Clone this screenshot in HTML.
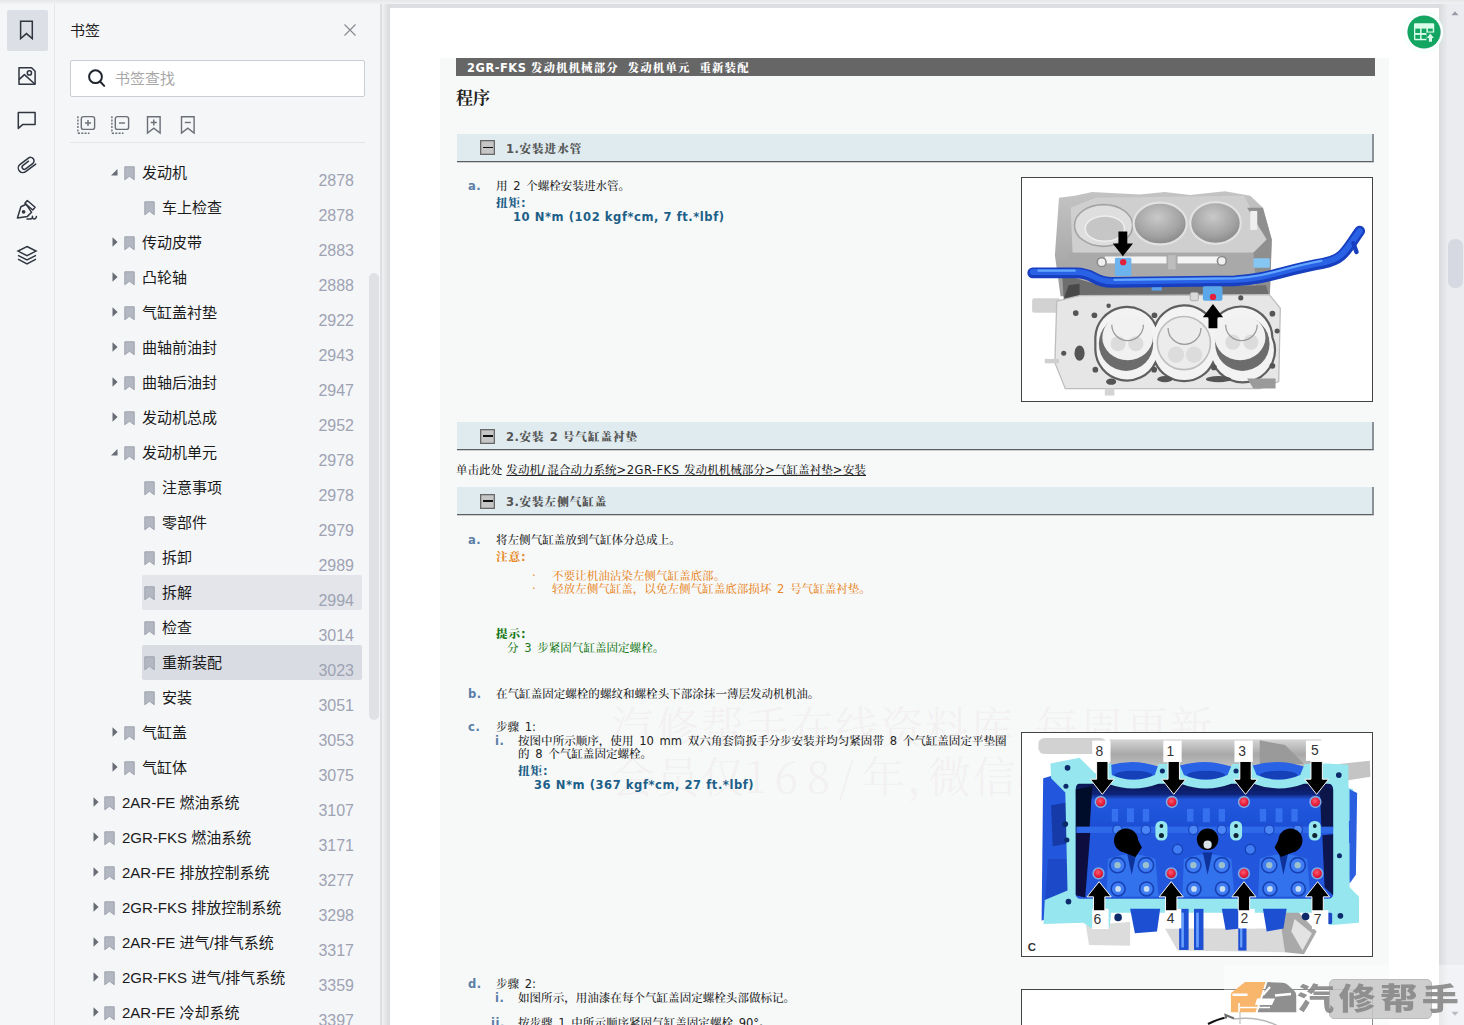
<!DOCTYPE html>
<html lang="zh-CN">
<head>
<meta charset="utf-8">
<title>书签 - 2GR-FKS 发动机机械部分 发动机单元 重新装配</title>
<style>
html,body{margin:0;padding:0;}
body{width:1464px;height:1025px;overflow:hidden;position:relative;background:#f5f6f8;font-family:"Liberation Sans","Noto Sans CJK SC",sans-serif;color:#1b1b1b;}
.abs,#lb,#sb,#main,#page,#content,.hl,.ar,.bk,.rt,.pg{position:absolute;}
/* top shadow strip */
#topsh{position:absolute;left:0;top:0;width:1464px;height:3.500px;background:linear-gradient(#e6e7e9,#f1f2f4);z-index:5;}
/* left icon bar */
#lb{left:0;top:0;width:54px;height:1025px;background:#f5f6f8;border-right:1px solid #e4e6ea;}
#lb .act{position:absolute;left:7px;top:10px;width:41px;height:41px;background:#dcdfe6;border-radius:2px;}
#lb svg{position:absolute;}
/* sidebar */
#sb{left:55px;top:0;width:325px;height:1025px;background:#f5f6f8;border-right:2px solid #dddfe3;overflow:hidden;}
#sb .ttl{position:absolute;left:15px;top:20px;font-size:15px;line-height:22px;color:#222;}
#sb .search{position:absolute;box-sizing:border-box;left:15px;top:60px;width:295px;height:36.5px;border:1px solid #c9cdd4;background:#fff;border-radius:2px;}
#sb .search span{position:absolute;left:44px;top:7px;font-size:15px;line-height:22px;color:#a8a8a8;}
#sb .divider{position:absolute;left:15px;top:142px;width:295px;height:1px;background:#e3e5e9;}
#tree{position:absolute;left:-55px;top:0;width:436px;height:1025px;}
.hl{left:142px;width:220px;height:34.5px;border-radius:2px;}
.hl.hov{background:#e3e5ea;}
.hl.sel{background:#d9dce3;}
.rt{font-size:15px;line-height:35px;height:35px;white-space:nowrap;color:#1a1a1a;}
.pg{left:300px;width:54px;text-align:right;font-size:16px;line-height:35px;height:35px;color:#9ea3b3;}
#sbar{position:absolute;left:314.300px;top:273px;width:9.500px;height:447px;border-radius:5px;background:#dfe1e5;}
/* main */
#main{left:382px;top:0;width:1082px;height:1025px;background:#eeeff1;overflow:hidden;}
#page{left:8px;top:8px;width:1049px;height:1017px;background:#fff;overflow:hidden;}
#pgsh{position:absolute;left:1px;top:3.5px;width:1064px;height:1030px;background:linear-gradient(to right,#f0f1f2 0,#e6e7e9 2px,#d9dadc 7px,#dcdde0 8px,#dddee1 9px,#dddee1 1055px,#dadbdd 1056px,#e9eaed 100%);}
#vsb{position:absolute;left:1065px;top:0;width:17px;height:1025px;background:#ebecf0;}
#vsb .th{position:absolute;left:1px;top:238.500px;width:14.500px;height:49.500px;border-radius:7px;background:#d6d9e2;}
#content{left:50px;top:50px;width:948.500px;height:967px;background:#f7f9f9;font-family:"DejaVu Sans","Noto Serif CJK SC",serif;font-size:11.55px;color:#222;font-weight:500;}
#content div, #content span{position:absolute;white-space:nowrap;}
#content div{line-height:16px;height:16px;}
#content .b{font-weight:bold;}
#content span{position:static !important;}
#content .zb{letter-spacing:1px;font-weight:900;}
#content .b{letter-spacing:0.55px;word-spacing:0;}
#content .tx,#content .nt,#content .hn{word-spacing:2px;}
#content .hdrt .zb{letter-spacing:1.15px;}
#content .l1{letter-spacing:0.45px;}
#content .l2{letter-spacing:2.4px;}
#content .lk{word-spacing:0.5px;}
#content .hdrt{font-size:11.4px;}
#content .h1{font-size:17px;font-weight:bold;line-height:24px;height:24px;color:#222;}
#content .sec{width:915px;height:27px !important;background:#dfebef;border-bottom:1px solid #5c5f60;border-right:2px solid #8c9296;box-shadow:0 1px 0 rgba(120,124,126,0.35);}
#content .mn{width:13px;height:13px !important;background:#c6c6c6;border:1px solid #686868;box-shadow:inset 0 0 0 0.500px #8e8e8e;}
#content .mn i{position:absolute;left:2px;top:5.700px;width:9.500px;height:1.700px !important;background:#111;}
#content .st{color:#555;}
#content .lab{color:#5b7fa8;}
#content .tx{color:#222;}
#content .tq{color:#1d5f88;}
#content .nt{color:#e8892b;}
#content .hn{color:#1a7a1a;}
#content .wm{font-family:"Noto Serif CJK SC",serif;font-size:43px;line-height:48px !important;height:48px !important;color:#f2f0f0;font-weight:300;letter-spacing:1.9px;word-spacing:7px;}
#content .fig{width:350px;height:223px;border:1px solid #444;background:#fff;}
#ovl{position:absolute;left:1224px;top:965px;width:240px;height:60px;background:rgba(255,255,255,0.38);z-index:4;overflow:hidden;}
#ovl .tip{position:absolute;left:105px;top:14px;width:101px;height:38px;border:1px solid #bcbcbc;border-radius:5px;background:rgba(198,198,198,0.85);}
#ovl .car{position:absolute;left:6px;top:16px;}
#ovl .lg{position:absolute;left:73px;top:6px;font-family:"Noto Sans CJK SC",sans-serif;font-weight:900;font-size:37px;line-height:50px;letter-spacing:4.6px;color:#8a8a8a;white-space:nowrap;transform:scaleY(0.8);transform-origin:0 50%;opacity:0.92;}
#sb .ic{position:absolute;}
#gbtn{position:absolute;left:1405px;top:13px;width:34px;height:34px;border:2px solid #fff;border-radius:50%;z-index:3;box-shadow:0 0 3px rgba(200,255,230,0.9);}
#gbtn svg{display:block;}
.sarr{position:absolute;}
</style>
</head>
<body>
<div id="lb">
  <div class="act"></div>
<svg style="left:15px;top:18px" width="24" height="24" viewBox="0 0 24 24" fill="none" stroke="#2f3640" stroke-width="1.5" stroke-linejoin="miter"><path d="M5.6 3.3H17.3V20.6L11.45 15.6L5.6 20.6Z"/></svg>
<svg style="left:15px;top:63.5px" width="24" height="24" viewBox="0 0 24 24" fill="none" stroke="#2f3640" stroke-width="1.5" stroke-linejoin="round"><path d="M4 3.8H16.6L20.1 7.3V20.2H4Z"/><circle cx="14.4" cy="8.9" r="2.1"/><path d="M4 15.6L9.4 10.6L19.8 20"/></svg>
<svg style="left:15px;top:108px" width="24" height="24" viewBox="0 0 24 24" fill="none" stroke="#2f3640" stroke-width="1.5" stroke-linejoin="round"><path d="M3.3 4.5H20.1V16.6H7.6L3.3 20.4Z"/></svg>
<svg style="left:15px;top:152.5px" width="24" height="24" viewBox="0 0 24 24" fill="none" stroke="#2f3640" stroke-width="1.5" stroke-linecap="round"><g transform="rotate(-37 12 12)"><path d="M15.500 9.900H8.600a2.200 2.200 0 0 0 0 4.400H17.300a3.500 3.500 0 0 0 0-7H6.900a4.600 4.600 0 0 0 0 9.200H19.500"/></g></svg>
<svg style="left:15px;top:198px" width="24" height="24" viewBox="0 0 24 24" fill="none" stroke="#2f3640" stroke-width="1.5" stroke-linejoin="round" stroke-linecap="round"><path d="M2.4 20L5.9 8.8L11.2 6.3L16.6 14.3L12.4 18.4Z"/><path d="M12.3 2.5L20.1 9.2L17.7 12L9.9 5.2Z"/><circle cx="8.6" cy="13.8" r="1.1" fill="#2f3640"/><path d="M12 20.9h3.2q2.6 0 2.2-2.6q.1 3 2.1 2.6q1.600-.3 1.900-2.300"/></svg>
<svg style="left:15px;top:243px" width="24" height="24" viewBox="0 0 24 24" fill="none" stroke="#2f3640" stroke-width="1.5" stroke-linejoin="miter"><path d="M12 3.5L21 8.1L12 12.700L3 8.1Z"/><path d="M3 12.300L12 16.900L21 12.300"/><path d="M3 16.200L12 20.800L21 16.200"/></svg>

</div>
<div id="sb">
  <div class="ttl">书签</div>
  <div class="search"><span>书签查找</span></div>
  <svg class="ic" style="left:288px;top:23px" width="14" height="14" viewBox="0 0 14 14" fill="none" stroke="#85888f" stroke-width="1.1"><path d="M1.500 1.500L12.500 12.500M12.500 1.500L1.500 12.500"/></svg>
<svg class="ic" style="left:30.5px;top:67px" width="22" height="22" viewBox="0 0 22 22" fill="none" stroke="#20242c" stroke-width="2" stroke-linecap="round"><circle cx="9.500" cy="9.700" r="6.400"/><path d="M14.300 14.800L18.200 18.900"/></svg>
<svg class="ic" style="left:21px;top:115px" width="20" height="20" viewBox="0 0 20 20" fill="none" stroke="#6b6f77" stroke-width="1.400"><rect x="5.300" y="1.600" width="13.300" height="12.800" rx="2.200"/><path d="M12 5V11M9 8H15"/><path d="M1.900 1.200V18.200M1.900 18M2 18.200H13.500" stroke-dasharray="2 1.300"/></svg>
<svg class="ic" style="left:55px;top:115px" width="20" height="20" viewBox="0 0 20 20" fill="none" stroke="#6b6f77" stroke-width="1.400"><rect x="5.300" y="1.600" width="13.300" height="12.800" rx="2.200"/><path d="M9 8H15"/><path d="M1.900 1.200V18.200M2 18.200H13.500" stroke-dasharray="2 1.300"/></svg>
<svg class="ic" style="left:90px;top:115px" width="18" height="20" viewBox="0 0 18 20" fill="none" stroke="#6b6f77" stroke-width="1.400"><path d="M2.500 1.800H15.100V18L8.800 13.200L2.500 18Z"/><path d="M8.800 4.500V10.500M5.800 7.500H11.800"/></svg>
<svg class="ic" style="left:124px;top:115px" width="18" height="20" viewBox="0 0 18 20" fill="none" stroke="#6b6f77" stroke-width="1.400"><path d="M2.500 1.800H15.100V18L8.800 13.200L2.500 18Z"/><path d="M5.800 7.500H11.800"/></svg>

  <div class="divider"></div>
  <div id="tree">
<svg class="ar" style="left:109px;top:167.0px" width="10" height="10" viewBox="0 0 10 10"><path d="M8.5 2v6.5H2z" fill="#686c74"/></svg>
<svg class="bk" style="left:124px;top:165.5px" width="11" height="15" viewBox="0 0 11 15"><path d="M0.8 0.8h9.4v13L5.5 10.2 0.8 13.8z" fill="#b3b7c1" stroke="#9ea3ae" stroke-width="1"/></svg>
<div class="rt" style="left:142px;top:155.0px">发动机</div>
<div class="pg" style="top:163.1px">2878</div>
<svg class="bk" style="left:144px;top:200.5px" width="11" height="15" viewBox="0 0 11 15"><path d="M0.8 0.8h9.4v13L5.5 10.2 0.8 13.8z" fill="#b3b7c1" stroke="#9ea3ae" stroke-width="1"/></svg>
<div class="rt" style="left:162px;top:190.0px">车上检查</div>
<div class="pg" style="top:198.1px">2878</div>
<svg class="ar" style="left:111px;top:236.0px" width="8" height="12" viewBox="0 0 8 12"><path d="M1.5 1.2L6.6 6 1.5 10.8z" fill="#686c74"/></svg>
<svg class="bk" style="left:124px;top:235.5px" width="11" height="15" viewBox="0 0 11 15"><path d="M0.8 0.8h9.4v13L5.5 10.2 0.8 13.8z" fill="#b3b7c1" stroke="#9ea3ae" stroke-width="1"/></svg>
<div class="rt" style="left:142px;top:225.0px">传动皮带</div>
<div class="pg" style="top:233.1px">2883</div>
<svg class="ar" style="left:111px;top:271.0px" width="8" height="12" viewBox="0 0 8 12"><path d="M1.5 1.2L6.6 6 1.5 10.8z" fill="#686c74"/></svg>
<svg class="bk" style="left:124px;top:270.5px" width="11" height="15" viewBox="0 0 11 15"><path d="M0.8 0.8h9.4v13L5.5 10.2 0.8 13.8z" fill="#b3b7c1" stroke="#9ea3ae" stroke-width="1"/></svg>
<div class="rt" style="left:142px;top:260.0px">凸轮轴</div>
<div class="pg" style="top:268.1px">2888</div>
<svg class="ar" style="left:111px;top:306.0px" width="8" height="12" viewBox="0 0 8 12"><path d="M1.5 1.2L6.6 6 1.5 10.8z" fill="#686c74"/></svg>
<svg class="bk" style="left:124px;top:305.5px" width="11" height="15" viewBox="0 0 11 15"><path d="M0.8 0.8h9.4v13L5.5 10.2 0.8 13.8z" fill="#b3b7c1" stroke="#9ea3ae" stroke-width="1"/></svg>
<div class="rt" style="left:142px;top:295.0px">气缸盖衬垫</div>
<div class="pg" style="top:303.1px">2922</div>
<svg class="ar" style="left:111px;top:341.0px" width="8" height="12" viewBox="0 0 8 12"><path d="M1.5 1.2L6.6 6 1.5 10.8z" fill="#686c74"/></svg>
<svg class="bk" style="left:124px;top:340.5px" width="11" height="15" viewBox="0 0 11 15"><path d="M0.8 0.8h9.4v13L5.5 10.2 0.8 13.8z" fill="#b3b7c1" stroke="#9ea3ae" stroke-width="1"/></svg>
<div class="rt" style="left:142px;top:330.0px">曲轴前油封</div>
<div class="pg" style="top:338.1px">2943</div>
<svg class="ar" style="left:111px;top:376.0px" width="8" height="12" viewBox="0 0 8 12"><path d="M1.5 1.2L6.6 6 1.5 10.8z" fill="#686c74"/></svg>
<svg class="bk" style="left:124px;top:375.5px" width="11" height="15" viewBox="0 0 11 15"><path d="M0.8 0.8h9.4v13L5.5 10.2 0.8 13.8z" fill="#b3b7c1" stroke="#9ea3ae" stroke-width="1"/></svg>
<div class="rt" style="left:142px;top:365.0px">曲轴后油封</div>
<div class="pg" style="top:373.1px">2947</div>
<svg class="ar" style="left:111px;top:411.0px" width="8" height="12" viewBox="0 0 8 12"><path d="M1.5 1.2L6.6 6 1.5 10.8z" fill="#686c74"/></svg>
<svg class="bk" style="left:124px;top:410.5px" width="11" height="15" viewBox="0 0 11 15"><path d="M0.8 0.8h9.4v13L5.5 10.2 0.8 13.8z" fill="#b3b7c1" stroke="#9ea3ae" stroke-width="1"/></svg>
<div class="rt" style="left:142px;top:400.0px">发动机总成</div>
<div class="pg" style="top:408.1px">2952</div>
<svg class="ar" style="left:109px;top:447.0px" width="10" height="10" viewBox="0 0 10 10"><path d="M8.5 2v6.5H2z" fill="#686c74"/></svg>
<svg class="bk" style="left:124px;top:445.5px" width="11" height="15" viewBox="0 0 11 15"><path d="M0.8 0.8h9.4v13L5.5 10.2 0.8 13.8z" fill="#b3b7c1" stroke="#9ea3ae" stroke-width="1"/></svg>
<div class="rt" style="left:142px;top:435.0px">发动机单元</div>
<div class="pg" style="top:443.1px">2978</div>
<svg class="bk" style="left:144px;top:480.5px" width="11" height="15" viewBox="0 0 11 15"><path d="M0.8 0.8h9.4v13L5.5 10.2 0.8 13.8z" fill="#b3b7c1" stroke="#9ea3ae" stroke-width="1"/></svg>
<div class="rt" style="left:162px;top:470.0px">注意事项</div>
<div class="pg" style="top:478.1px">2978</div>
<svg class="bk" style="left:144px;top:515.5px" width="11" height="15" viewBox="0 0 11 15"><path d="M0.8 0.8h9.4v13L5.5 10.2 0.8 13.8z" fill="#b3b7c1" stroke="#9ea3ae" stroke-width="1"/></svg>
<div class="rt" style="left:162px;top:505.0px">零部件</div>
<div class="pg" style="top:513.1px">2979</div>
<svg class="bk" style="left:144px;top:550.5px" width="11" height="15" viewBox="0 0 11 15"><path d="M0.8 0.8h9.4v13L5.5 10.2 0.8 13.8z" fill="#b3b7c1" stroke="#9ea3ae" stroke-width="1"/></svg>
<div class="rt" style="left:162px;top:540.0px">拆卸</div>
<div class="pg" style="top:548.1px">2989</div>
<div class="hl hov" style="top:575.0px"></div>
<svg class="bk" style="left:144px;top:585.5px" width="11" height="15" viewBox="0 0 11 15"><path d="M0.8 0.8h9.4v13L5.5 10.2 0.8 13.8z" fill="#b3b7c1" stroke="#9ea3ae" stroke-width="1"/></svg>
<div class="rt" style="left:162px;top:575.0px">拆解</div>
<div class="pg" style="top:583.1px">2994</div>
<svg class="bk" style="left:144px;top:620.5px" width="11" height="15" viewBox="0 0 11 15"><path d="M0.8 0.8h9.4v13L5.5 10.2 0.8 13.8z" fill="#b3b7c1" stroke="#9ea3ae" stroke-width="1"/></svg>
<div class="rt" style="left:162px;top:610.0px">检查</div>
<div class="pg" style="top:618.1px">3014</div>
<div class="hl sel" style="top:645.0px"></div>
<svg class="bk" style="left:144px;top:655.5px" width="11" height="15" viewBox="0 0 11 15"><path d="M0.8 0.8h9.4v13L5.5 10.2 0.8 13.8z" fill="#b3b7c1" stroke="#9ea3ae" stroke-width="1"/></svg>
<div class="rt" style="left:162px;top:645.0px">重新装配</div>
<div class="pg" style="top:653.1px">3023</div>
<svg class="bk" style="left:144px;top:690.5px" width="11" height="15" viewBox="0 0 11 15"><path d="M0.8 0.8h9.4v13L5.5 10.2 0.8 13.8z" fill="#b3b7c1" stroke="#9ea3ae" stroke-width="1"/></svg>
<div class="rt" style="left:162px;top:680.0px">安装</div>
<div class="pg" style="top:688.1px">3051</div>
<svg class="ar" style="left:111px;top:726.0px" width="8" height="12" viewBox="0 0 8 12"><path d="M1.5 1.2L6.6 6 1.5 10.8z" fill="#686c74"/></svg>
<svg class="bk" style="left:124px;top:725.5px" width="11" height="15" viewBox="0 0 11 15"><path d="M0.8 0.8h9.4v13L5.5 10.2 0.8 13.8z" fill="#b3b7c1" stroke="#9ea3ae" stroke-width="1"/></svg>
<div class="rt" style="left:142px;top:715.0px">气缸盖</div>
<div class="pg" style="top:723.1px">3053</div>
<svg class="ar" style="left:111px;top:761.0px" width="8" height="12" viewBox="0 0 8 12"><path d="M1.5 1.2L6.6 6 1.5 10.8z" fill="#686c74"/></svg>
<svg class="bk" style="left:124px;top:760.5px" width="11" height="15" viewBox="0 0 11 15"><path d="M0.8 0.8h9.4v13L5.5 10.2 0.8 13.8z" fill="#b3b7c1" stroke="#9ea3ae" stroke-width="1"/></svg>
<div class="rt" style="left:142px;top:750.0px">气缸体</div>
<div class="pg" style="top:758.1px">3075</div>
<svg class="ar" style="left:92px;top:796.0px" width="8" height="12" viewBox="0 0 8 12"><path d="M1.5 1.2L6.6 6 1.5 10.8z" fill="#686c74"/></svg>
<svg class="bk" style="left:104px;top:795.5px" width="11" height="15" viewBox="0 0 11 15"><path d="M0.8 0.8h9.4v13L5.5 10.2 0.8 13.8z" fill="#b3b7c1" stroke="#9ea3ae" stroke-width="1"/></svg>
<div class="rt" style="left:122px;top:785.0px">2AR-FE 燃油系统</div>
<div class="pg" style="top:793.1px">3107</div>
<svg class="ar" style="left:92px;top:831.0px" width="8" height="12" viewBox="0 0 8 12"><path d="M1.5 1.2L6.6 6 1.5 10.8z" fill="#686c74"/></svg>
<svg class="bk" style="left:104px;top:830.5px" width="11" height="15" viewBox="0 0 11 15"><path d="M0.8 0.8h9.4v13L5.5 10.2 0.8 13.8z" fill="#b3b7c1" stroke="#9ea3ae" stroke-width="1"/></svg>
<div class="rt" style="left:122px;top:820.0px">2GR-FKS 燃油系统</div>
<div class="pg" style="top:828.1px">3171</div>
<svg class="ar" style="left:92px;top:866.0px" width="8" height="12" viewBox="0 0 8 12"><path d="M1.5 1.2L6.6 6 1.5 10.8z" fill="#686c74"/></svg>
<svg class="bk" style="left:104px;top:865.5px" width="11" height="15" viewBox="0 0 11 15"><path d="M0.8 0.8h9.4v13L5.5 10.2 0.8 13.8z" fill="#b3b7c1" stroke="#9ea3ae" stroke-width="1"/></svg>
<div class="rt" style="left:122px;top:855.0px">2AR-FE 排放控制系统</div>
<div class="pg" style="top:863.1px">3277</div>
<svg class="ar" style="left:92px;top:901.0px" width="8" height="12" viewBox="0 0 8 12"><path d="M1.5 1.2L6.6 6 1.5 10.8z" fill="#686c74"/></svg>
<svg class="bk" style="left:104px;top:900.5px" width="11" height="15" viewBox="0 0 11 15"><path d="M0.8 0.8h9.4v13L5.5 10.2 0.8 13.8z" fill="#b3b7c1" stroke="#9ea3ae" stroke-width="1"/></svg>
<div class="rt" style="left:122px;top:890.0px">2GR-FKS 排放控制系统</div>
<div class="pg" style="top:898.1px">3298</div>
<svg class="ar" style="left:92px;top:936.0px" width="8" height="12" viewBox="0 0 8 12"><path d="M1.5 1.2L6.6 6 1.5 10.8z" fill="#686c74"/></svg>
<svg class="bk" style="left:104px;top:935.5px" width="11" height="15" viewBox="0 0 11 15"><path d="M0.8 0.8h9.4v13L5.5 10.2 0.8 13.8z" fill="#b3b7c1" stroke="#9ea3ae" stroke-width="1"/></svg>
<div class="rt" style="left:122px;top:925.0px">2AR-FE 进气/排气系统</div>
<div class="pg" style="top:933.1px">3317</div>
<svg class="ar" style="left:92px;top:971.0px" width="8" height="12" viewBox="0 0 8 12"><path d="M1.5 1.2L6.6 6 1.5 10.8z" fill="#686c74"/></svg>
<svg class="bk" style="left:104px;top:970.5px" width="11" height="15" viewBox="0 0 11 15"><path d="M0.8 0.8h9.4v13L5.5 10.2 0.8 13.8z" fill="#b3b7c1" stroke="#9ea3ae" stroke-width="1"/></svg>
<div class="rt" style="left:122px;top:960.0px">2GR-FKS 进气/排气系统</div>
<div class="pg" style="top:968.1px">3359</div>
<svg class="ar" style="left:92px;top:1006.0px" width="8" height="12" viewBox="0 0 8 12"><path d="M1.5 1.2L6.6 6 1.5 10.8z" fill="#686c74"/></svg>
<svg class="bk" style="left:104px;top:1005.5px" width="11" height="15" viewBox="0 0 11 15"><path d="M0.8 0.8h9.4v13L5.5 10.2 0.8 13.8z" fill="#b3b7c1" stroke="#9ea3ae" stroke-width="1"/></svg>
<div class="rt" style="left:122px;top:995.0px">2AR-FE 冷却系统</div>
<div class="pg" style="top:1003.1px">3397</div>
  </div>
  <div id="sbar"></div>
</div>
<div id="main">
  <div id="pgsh"></div>
  <div id="page">
    <div id="content">
<div class="wm" style="left:171px;top:643px;">汽修帮手在线资料库 每周更新</div>
<div class="wm" style="left:171px;top:693px;">会员仅<span style="letter-spacing:8.500px">168/</span>年<span style="letter-spacing:-22px">，</span>微信qxbs168</div>
<div class="hdr" style="left:16px;top:0;width:919px;height:18px;background:#666;"></div>
<div class="hdrt b" style="left:27px;top:2px;color:#fff;"><span class="la">2GR-FKS </span><span class="zb">发动机机械部分</span><span class="la">&nbsp; </span><span class="zb">发动机单元</span><span class="la">&nbsp; </span><span class="zb">重新装配</span></div>
<div class="h1" style="left:16px;top:28px;">程序</div>

<div class="sec" style="left:17px;top:75.500px;"></div>
<div class="mn" style="left:40px;top:82px;"><i></i></div>
<div class="st b" style="left:66px;top:83px;"><span class="la">1.</span><span class="zb">安装进水管</span></div>

<div class="lab b" style="left:28px;top:120px;">a.</div>
<div class="tx" style="left:56px;top:120px;">用 2 个螺栓安装进水管。</div>
<div class="tq b" style="left:56px;top:137px;"><span class="zb">扭矩:</span></div>
<div class="tq b" style="left:73px;top:151px;">10 N*m (102 kgf*cm, 7 ft.*lbf)</div>

<div class="sec" style="left:17px;top:364px;"></div>
<div class="mn" style="left:40px;top:370.500px;"><i></i></div>
<div class="st b" style="left:66px;top:371px;"><span class="la">2.</span><span class="zb">安装 </span><span class="la">2 </span><span class="zb">号气缸盖衬垫</span></div>

<div class="tx lk" style="left:16px;top:404px;">单击此处 <u>发动机<span class="l2">/</span>混合动力系统<span class="l1">&gt;2GR-FKS </span>发动机机械部分<span class="l1">&gt;</span>气缸盖衬垫<span class="l1">&gt;</span>安装</u></div>

<div class="sec" style="left:17px;top:429px;"></div>
<div class="mn" style="left:40px;top:435.500px;"><i></i></div>
<div class="st b" style="left:66px;top:436px;"><span class="la">3.</span><span class="zb">安装左侧气缸盖</span></div>

<div class="lab b" style="left:28px;top:474px;">a.</div>
<div class="tx" style="left:56px;top:474px;">将左侧气缸盖放到气缸体分总成上。</div>
<div class="nt b" style="left:56px;top:491px;"><span class="zb">注意:</span></div>
<div class="nt" style="left:92px;top:510px;">·</div>
<div class="nt" style="left:112px;top:510px;">不要让机油沾染左侧气缸盖底部。</div>
<div class="nt" style="left:92px;top:523px;">·</div>
<div class="nt" style="left:112px;top:523px;">轻放左侧气缸盖，以免左侧气缸盖底部损坏 2 号气缸盖衬垫。</div>
<div class="hn b" style="left:56px;top:568px;"><span class="zb">提示:</span></div>
<div class="hn" style="left:67px;top:582px;">分 3 步紧固气缸盖固定螺栓。</div>

<div class="lab b" style="left:28px;top:628px;">b.</div>
<div class="tx" style="left:56px;top:628px;">在气缸盖固定螺栓的螺纹和螺栓头下部涂抹一薄层发动机机油。</div>

<div class="lab b" style="left:28px;top:661px;">c.</div>
<div class="tx" style="left:56px;top:661px;">步骤 1:</div>
<div class="lab b" style="left:55px;top:675px;">i.</div>
<div class="tx" style="left:78px;top:675px;">按图中所示顺序，使用 10 mm 双六角套筒扳手分步安装并均匀紧固带 8 个气缸盖固定平垫圈</div>
<div class="tx" style="left:78px;top:688px;">的 8 个气缸盖固定螺栓。</div>
<div class="tq b" style="left:78px;top:705px;"><span class="zb">扭矩:</span></div>
<div class="tq b" style="left:94px;top:719px;">36 N*m (367 kgf*cm, 27 ft.*lbf)</div>

<div class="lab b" style="left:28px;top:918px;">d.</div>
<div class="tx" style="left:56px;top:918px;">步骤 2:</div>
<div class="lab b" style="left:55px;top:932px;">i.</div>
<div class="tx" style="left:78px;top:932px;">如图所示，用油漆在每个气缸盖固定螺栓头部做标记。</div>
<div class="lab b" style="left:51px;top:957px;">ii.</div>
<div class="tx" style="left:78px;top:957px;">按步骤 1 中所示顺序紧固气缸盖固定螺栓 90°。</div>


<div class="fig" style="left:581px;top:119px;" id="fig1"><svg width="350" height="223" viewBox="68 56 1107 705" style="position:absolute;left:0;top:0">
<defs>
<radialGradient id="cyl" cx="0.45" cy="0.35" r="0.75"><stop offset="0" stop-color="#c9c9c9"/><stop offset="0.6" stop-color="#a2a2a2"/><stop offset="1" stop-color="#7d7d7d"/></radialGradient>
<linearGradient id="ub" x1="0" y1="0" x2="0" y2="1"><stop offset="0" stop-color="#c4c4c4"/><stop offset="1" stop-color="#9c9c9c"/></linearGradient>
<filter id="bl1" x="-5%" y="-5%" width="110%" height="110%"><feGaussianBlur stdDeviation="2.2"/></filter>
</defs>
<g filter="url(#bl1)">
<!-- upper block -->
<path d="M185 118 L235 112 L290 100 L440 108 L520 100 L600 110 L710 98 L790 112 L830 150 L858 250 L852 430 L190 430 L172 300 Z" fill="url(#ub)"/>
<path d="M222 150 L300 118 L770 112 L842 250 L800 292 L228 292 Z" fill="#cfcfcf"/>
<ellipse cx="326" cy="206" rx="92" ry="66" fill="#dedede" stroke="#a4a4a4" stroke-width="5"/>
<ellipse cx="330" cy="216" rx="62" ry="40" fill="#c6c6c6" stroke="#eeeeee" stroke-width="5"/>
<ellipse cx="505" cy="200" rx="84" ry="66" fill="url(#cyl)" stroke="#e2e2e2" stroke-width="7"/>
<ellipse cx="680" cy="198" rx="80" ry="66" fill="url(#cyl)" stroke="#e2e2e2" stroke-width="7"/>
<path d="M215 292 L800 292 L835 330 L835 425 L215 425 Z" fill="#a9a9a9"/>
<rect x="330" y="304" width="195" height="22" fill="#f4f4f4"/>
<rect x="560" y="304" width="135" height="22" fill="#f4f4f4"/>
<path d="M780 150 L830 150 L858 250 L852 420 L810 420 L800 292 L842 250 Z" fill="#8f8f8f"/>
<rect x="790" y="160" width="22" height="60" fill="#efefef"/>
<circle cx="320" cy="322" r="14" fill="#f0f0f0" stroke="#8a8a8a" stroke-width="5"/>
<circle cx="700" cy="318" r="14" fill="#f0f0f0" stroke="#8a8a8a" stroke-width="5"/>
<rect x="530" y="300" width="24" height="45" fill="#bdbdbd"/>
<!-- dark gap between blocks -->
<path d="M195 360 L330 400 L840 395 L850 430 L240 440 L200 440 Z" fill="#6e6e6e"/>
<path d="M215 395 L250 390 L250 440 L200 440 Z" fill="#4a4a4a"/>
<!-- lower block -->
<rect x="100" y="436" width="90" height="46" rx="8" fill="#d2d2d2"/>
<path d="M178 445 L250 428 L850 425 L885 468 L880 700 L820 722 L205 722 L172 640 Z" fill="#e6e6e6"/>
<path d="M178 445 L250 428 L850 425 L885 468 L880 700 L820 722 L205 722 L172 640 Z" fill="none" stroke="#bdbdbd" stroke-width="4"/>
<!-- gasket ring -->
<path d="M300 560 A100 100 0 0 1 490 520 A100 100 0 0 1 672 515 A100 100 0 0 1 860 560 A100 100 0 0 1 672 640 A100 100 0 0 1 490 640 A100 100 0 0 1 300 600 Z" fill="#f3f3f3" stroke="#5f5f5f" stroke-width="7"/>
<circle cx="397" cy="580" r="86" fill="#6c6c6c"/>
<ellipse cx="402" cy="560" rx="80" ry="72" fill="#f1f1f1"/>
<circle cx="765" cy="580" r="86" fill="#6c6c6c"/>
<ellipse cx="758" cy="560" rx="80" ry="72" fill="#f1f1f1"/>
<circle cx="580" cy="578" r="84" fill="#ececec" stroke="#bdbdbd" stroke-width="5"/>
<g fill="#dcdcdc"><circle cx="372" cy="580" r="24"/><circle cx="428" cy="580" r="24"/><circle cx="555" cy="615" r="26"/><circle cx="612" cy="615" r="26"/><circle cx="735" cy="575" r="24"/><circle cx="792" cy="575" r="24"/></g>
<g fill="none" stroke="#9a9a9a" stroke-width="4"><path d="M352 520 A50 50 0 0 0 452 520"/><path d="M530 530 A52 52 0 0 0 634 530"/><path d="M712 520 A50 50 0 0 0 812 520"/></g>
<g fill="#555"><circle cx="238" cy="483" r="9"/><circle cx="297" cy="490" r="9"/><circle cx="342" cy="460" r="7"/><circle cx="487" cy="490" r="9"/><circle cx="760" cy="435" r="8"/><circle cx="860" cy="485" r="9"/><circle cx="875" cy="540" r="8"/><circle cx="300" cy="662" r="9"/><circle cx="486" cy="662" r="9"/><circle cx="675" cy="655" r="9"/><circle cx="860" cy="650" r="9"/><circle cx="200" cy="610" r="8"/><ellipse cx="350" cy="700" rx="16" ry="10"/><ellipse cx="520" cy="692" rx="24" ry="10"/><ellipse cx="690" cy="692" rx="40" ry="10"/><ellipse cx="250" cy="610" rx="16" ry="24"/></g>
<rect x="140" y="628" width="45" height="14" fill="#cfcfcf"/>
<rect x="330" y="722" width="30" height="22" fill="#d4d4d4"/>
<path d="M780 690 L870 690 L870 722 L800 722 Z" fill="#9a9a9a"/>
<rect x="600" y="418" width="26" height="26" rx="6" fill="#d9d9d9" stroke="#aaa" stroke-width="3"/>
</g>
<!-- pipe -->
<g fill="none" stroke-linecap="round" stroke-linejoin="round">
<rect x="362" y="308" width="52" height="58" rx="4" fill="#6db3ee"/>
<rect x="800" y="310" width="52" height="30" rx="4" fill="#86c6f2"/>
<rect x="478" y="382" width="32" height="30" fill="#5c9fe8"/>
<path d="M102 356 L238 356 C300 356 292 386 352 386 L740 381 C850 376 900 346 1020 326 C1085 314 1092 285 1136 224" stroke="#173fc0" stroke-width="34"/>
<path d="M102 353 L238 353 C300 353 292 383 352 383 L740 378 C850 373 900 343 1020 323 C1085 311 1092 282 1136 224" stroke="#2a62e6" stroke-width="19"/>
<path d="M120 349 L235 349 M360 378 L740 373 C850 368 900 338 1015 318" stroke="#62a6ff" stroke-width="7"/>
<path d="M1116 262 L1126 290" stroke="#173fc0" stroke-width="14"/>
<rect x="640" y="398" width="62" height="46" rx="6" fill="#5aa8ea"/>
</g>
<circle cx="388" cy="322" r="10" fill="#e2203c"/>
<circle cx="672" cy="432" r="10" fill="#e2203c"/>
<path d="M373 225 H401 V263 H419 L387 303 L355 263 H373 Z" fill="#000"/>
<path d="M672 454 L704 496 H686 V531 H658 V496 H640 Z" fill="#000"/>
</svg>
</div>
<div class="fig" style="left:581px;top:674px;" id="fig2"><svg width="350" height="223" viewBox="68 72 1107 705" style="position:absolute;left:0;top:0">
<defs>
<linearGradient id="gtop" x1="0" y1="0" x2="0" y2="1"><stop offset="0" stop-color="#d6d6d6"/><stop offset="0.5" stop-color="#a8a8a8"/><stop offset="1" stop-color="#c4c4c4"/></linearGradient>
<linearGradient id="ch1" x1="0" y1="0" x2="0" y2="1"><stop offset="0" stop-color="#0a1650"/><stop offset="0.24" stop-color="#10247a"/><stop offset="0.36" stop-color="#2158de"/><stop offset="1" stop-color="#1d4fd4"/></linearGradient>
<radialGradient id="bolt" cx="0.45" cy="0.4" r="0.6"><stop offset="0" stop-color="#ff5a6e"/><stop offset="0.7" stop-color="#e01835"/><stop offset="1" stop-color="#b01028"/></radialGradient>
<filter id="bl2" x="-5%" y="-5%" width="110%" height="110%"><feGaussianBlur stdDeviation="2.2"/></filter>
</defs>
<g filter="url(#bl2)">
<!-- gray background parts -->
<rect x="120" y="88" width="215" height="50" rx="18" fill="#d2d2d2"/>
<rect x="345" y="92" width="670" height="95" fill="url(#gtop)"/>
<path d="M820 95 L900 110 L960 170 L820 170 Z" fill="#9a9a9a"/>
<path d="M1070 170 L1168 160 L1170 210 L1075 225 Z" fill="#c4c4c4"/>
<rect x="150" y="228" width="60" height="16" fill="#bdbdbd"/>
<!-- bottom gray -->
<path d="M270 680 L410 670 L410 745 L280 742 Z" fill="#dcdcdc"/>
<path d="M520 690 L900 690 L900 765 L560 760 Z" fill="#d9d9d9"/>
<path d="M880 632 L930 625 L1000 700 L960 772 L900 765 Z" fill="#a9a9a9"/>
<path d="M930 660 L985 705 L955 760 L920 700 Z" fill="#e3e3e3"/>
<!-- left side blue body -->
<path d="M135 215 L225 190 L245 640 L130 665 Z" fill="#2457dc"/>
<path d="M160 300 L220 290 L225 420 L165 430 Z" fill="#123aa8"/>
<path d="M150 470 L225 470 L230 600 L140 620 Z" fill="#1b4ac8"/>
<!-- right side bits -->
<path d="M1085 240 L1115 250 L1112 520 L1088 560 Z" fill="#8fe3ee"/>
<rect x="1085" y="350" width="22" height="70" fill="#2a5fe0"/>
<!-- cam cap bumps (blue) -->
<path d="M340 175 Q420 150 500 178 L500 230 L340 230 Z" fill="#2b62e6"/>
<path d="M568 175 Q650 150 730 178 L730 230 L568 230 Z" fill="#2b62e6"/>
<path d="M798 175 Q880 150 960 178 L960 230 L798 230 Z" fill="#2b62e6"/>
<g fill="#1440b8"><ellipse cx="420" cy="205" rx="60" ry="14"/><ellipse cx="650" cy="205" rx="60" ry="14"/><ellipse cx="880" cy="205" rx="60" ry="14"/></g>
<!-- cyan frame -->
<path d="M158 168 L250 150 L300 200 L330 168 L350 168 L352 205 Q420 235 488 205 L500 170 L565 168 L580 205 Q650 235 718 205 L733 170 L795 168 L810 205 Q880 235 948 205 L962 170 L1030 168 L1100 172 L1104 560 L1134 590 L1134 672 L1040 680 L1030 640 L350 640 L345 686 L285 688 L262 672 L136 676 L140 600 L212 570 L205 260 L160 215 Z" fill="#95e6ef"/>
<path d="M1104 250 L1128 262 L1124 520 L1104 548 Z" fill="#2a5fe0"/>
<!-- upper chamber -->
<path d="M250 232 Q238 232 238 250 L238 372 L1052 372 L1052 250 Q1052 232 1036 232 L960 232 Q880 262 800 232 L730 232 Q650 262 570 232 L500 232 Q420 262 340 232 Z" fill="url(#ch1)"/>
<path d="M238 250 L290 240 L282 372 L238 372 Z" fill="#060b2c"/>
<path d="M1010 240 L1052 250 L1052 372 L1015 372 Z" fill="#0a1348"/>
<g fill="#0c1c66"><path d="M345 262 Q430 305 500 262 L500 300 L345 300 Z" opacity="0"/></g>
<g fill="#3a76f4" opacity="0.85"><rect x="352" y="312" width="20" height="40"/><rect x="400" y="310" width="22" height="44"/><rect x="450" y="312" width="20" height="40"/><rect x="590" y="312" width="20" height="40"/><rect x="640" y="310" width="22" height="44"/><rect x="690" y="312" width="20" height="40"/><rect x="820" y="312" width="20" height="40"/><rect x="870" y="310" width="22" height="44"/><rect x="920" y="312" width="20" height="40"/></g>
<!-- middle rail + lower chamber -->
<path d="M238 372 L1052 372 L1052 580 Q1052 596 1036 596 L254 596 Q238 596 238 580 Z" fill="#2157dc"/>
<g fill="#3576ee" opacity="0.9"><path d="M340 470 Q415 440 490 470 L500 590 L335 590 Z"/><path d="M580 470 Q655 440 730 470 L740 590 L575 590 Z"/><path d="M820 470 Q895 440 970 470 L980 590 L815 590 Z"/></g>
<path d="M238 372 L285 372 L268 592 L238 585 Z" fill="#081040"/>
<path d="M1018 395 L1052 392 L1052 585 L1025 560 Z" fill="#0a1450"/>
<rect x="240" y="368" width="812" height="20" fill="#2f69ea"/>
<g fill="#4b86f6" stroke="#1a46c0" stroke-width="4"><circle cx="370" cy="378" r="15"/><circle cx="460" cy="378" r="15"/><circle cx="610" cy="378" r="15"/><circle cx="700" cy="378" r="15"/><circle cx="850" cy="378" r="15"/><circle cx="940" cy="378" r="15"/></g>
<!-- valve seats -->
<g fill="#3f7df4" stroke="#1640b4" stroke-width="5"><circle cx="370" cy="490" r="24"/><circle cx="460" cy="490" r="24"/><circle cx="610" cy="490" r="24"/><circle cx="700" cy="490" r="24"/><circle cx="850" cy="490" r="24"/><circle cx="940" cy="490" r="24"/><circle cx="372" cy="565" r="22"/><circle cx="462" cy="565" r="22"/><circle cx="612" cy="565" r="22"/><circle cx="702" cy="565" r="22"/><circle cx="852" cy="565" r="22"/><circle cx="942" cy="565" r="22"/></g>
<g fill="#9cc0cc"><circle cx="370" cy="490" r="10"/><circle cx="460" cy="490" r="10"/><circle cx="610" cy="490" r="10"/><circle cx="700" cy="490" r="10"/><circle cx="850" cy="490" r="10"/><circle cx="940" cy="490" r="10"/></g>
<g fill="#c9dff0"><circle cx="372" cy="565" r="9"/><circle cx="462" cy="565" r="9"/><circle cx="612" cy="565" r="9"/><circle cx="702" cy="565" r="9"/><circle cx="852" cy="565" r="9"/><circle cx="942" cy="565" r="9"/></g>
<g fill="#10309a"><path d="M400 450 L430 450 L415 520 Z"/><path d="M640 450 L670 450 L655 520 Z"/><path d="M880 450 L910 450 L895 520 Z"/></g>
<g fill="#3f7df4" stroke="#1640b4" stroke-width="4"><circle cx="560" cy="440" r="16"/><circle cx="790" cy="440" r="16"/></g>
<!-- plug holes -->
<circle cx="397" cy="412" r="38" fill="#000"/><circle cx="917" cy="412" r="38" fill="#000"/>
<circle cx="655" cy="408" r="34" fill="#000"/><circle cx="655" cy="425" r="13" fill="#d8e4ea"/>
<path d="M397 412 m-20 32 l50 20 l20 -30 l-20 -40 Z" fill="#000"/>
<path d="M917 412 m20 32 l-50 20 l-20 -30 l20 -40 Z" fill="#000"/>
<!-- cyan figure-8 brackets -->
<g fill="#95e6ef"><rect x="490" y="350" width="38" height="62" rx="17"/><rect x="726" y="350" width="38" height="62" rx="17"/><rect x="975" y="350" width="38" height="62" rx="17"/></g>
<g fill="#123"><circle cx="509" cy="366" r="6"/><circle cx="509" cy="396" r="8"/><circle cx="745" cy="366" r="6"/><circle cx="745" cy="396" r="8"/><circle cx="994" cy="366" r="6"/><circle cx="994" cy="396" r="8"/></g>
<!-- frame holes -->
<g fill="#0e2a6a"><circle cx="212" cy="182" r="9"/><circle cx="207" cy="240" r="8"/><circle cx="205" cy="360" r="9"/><circle cx="210" cy="410" r="8"/><circle cx="215" cy="605" r="9"/><circle cx="332" cy="190" r="8"/><circle cx="512" cy="192" r="8"/><circle cx="745" cy="192" r="8"/><circle cx="1070" cy="205" r="9"/><circle cx="1072" cy="460" r="8"/><circle cx="1075" cy="650" r="9"/><circle cx="372" cy="655" r="12"/><circle cx="965" cy="652" r="12"/></g>
<!-- bottom blue posts -->
<g fill="#1f4fd2"><path d="M410 628 L505 628 L495 700 L425 705 Z"/><rect x="565" y="628" width="30" height="130"/><rect x="612" y="628" width="30" height="130"/><path d="M700 628 L765 628 L760 690 L712 695 Z"/><rect x="752" y="640" width="26" height="120"/><path d="M830 628 L905 628 L895 690 L842 700 Z"/></g>
<g fill="#6aa2ff"><rect x="572" y="640" width="8" height="110"/><rect x="619" y="640" width="8" height="110"/><rect x="758" y="650" width="7" height="100"/></g>
<rect x="1025" y="640" width="24" height="36" rx="5" fill="#1a46c6"/>
</g>
<!-- bolts -->
<g fill="url(#bolt)" stroke="#7fa8e6" stroke-width="5"><circle cx="317" cy="290" r="17"/><circle cx="542" cy="290" r="17"/><circle cx="770" cy="290" r="17"/><circle cx="996" cy="290" r="17"/><circle cx="310" cy="516" r="17"/><circle cx="540" cy="516" r="17"/><circle cx="770" cy="516" r="17"/><circle cx="1002" cy="516" r="17"/></g>
<!-- label boxes -->
<g fill="#fff"><rect x="290" y="96" width="58" height="68"/><rect x="515" y="96" width="58" height="68"/><rect x="740" y="96" width="58" height="68"/><rect x="966" y="96" width="58" height="64"/><rect x="290" y="628" width="52" height="64"/><rect x="520" y="628" width="52" height="62"/><rect x="752" y="628" width="52" height="62"/><rect x="985" y="632" width="52" height="60"/></g>
<!-- arrows -->
<g fill="#000" stroke="#fff" stroke-width="3" stroke-linejoin="miter">
<path d="M304 162 H340 V218 H360 L322 266 L284 218 H304 Z"/>
<path d="M530 162 H566 V218 H586 L548 266 L510 218 H530 Z"/>
<path d="M757 162 H793 V218 H813 L775 266 L737 218 H757 Z"/>
<path d="M982 162 H1018 V218 H1038 L1000 266 L962 218 H982 Z"/>
<path d="M312 542 L350 590 H330 V634 H294 V590 H274 Z"/>
<path d="M540 542 L578 590 H558 V634 H522 V590 H502 Z"/>
<path d="M770 542 L808 590 H788 V634 H752 V590 H732 Z"/>
<path d="M1003 542 L1041 590 H1021 V634 H985 V590 H965 Z"/>
</g>
<g font-family="Liberation Sans, sans-serif" font-size="44" fill="#333" text-anchor="middle">
<text x="313" y="144">8</text><text x="537" y="144">1</text><text x="764" y="144">3</text><text x="994" y="140">5</text>
<text x="306" y="675">6</text><text x="538" y="673">4</text><text x="771" y="673">2</text><text x="1003" y="676">7</text>
</g>
<text x="86" y="760" font-family="Liberation Sans, sans-serif" font-size="36" font-weight="bold" fill="#333">C</text>
</svg>
</div>
<div class="fig" style="left:581px;top:931px;" id="fig3"><svg width="350" height="40" viewBox="0 0 350 40" style="position:absolute;left:0;top:0"><path d="M186 34 Q196 29 204 27.500 L203.500 25 L212 28.500" fill="none" stroke="#111" stroke-width="2"/><path d="M218 11 V34" stroke="#888" stroke-width="1"/><path d="M212 29 Q236 26 256 36" fill="none" stroke="#8a8a8a" stroke-width="1.500"/></svg>
</div>

    </div>
  </div>
  <div id="vsb"><div class="th"></div></div>
</div>
<div id="gbtn"><svg width="34" height="34" viewBox="0 0 34 34"><circle cx="17" cy="17" r="16.600" fill="#13a562"/><g><rect x="7" y="8.200" width="20.200" height="17" rx="1" fill="#d9fbe9"/><g fill="#13a562"><rect x="8.300" y="13.600" width="4.800" height="4.400"/><rect x="14.600" y="13.600" width="4.800" height="4.400"/><rect x="20.900" y="13.600" width="4.900" height="2.900"/><rect x="8.300" y="19.900" width="4.800" height="3.900"/><rect x="14.600" y="19.900" width="4.800" height="3.900"/><rect x="19.400" y="17.600" width="9" height="9"/></g><path d="M23.300 18.500L26.900 22.900H25V26.800H21.900V22.900H19.800Z" fill="#d9fbe9"/></g></svg></div>
<svg class="sarr" style="left:1450px;top:10px" width="10" height="6" viewBox="0 0 10 6"><path d="M5 1.300L8.600 5.200H1.400Z" fill="#9a9ca8"/></svg>
<svg class="sarr" style="left:1450px;top:1011px;z-index:6" width="10" height="6" viewBox="0 0 10 6"><path d="M5 4.700L8.600 0.800H1.400Z" fill="#b9bbc4"/></svg>
<div id="ovl">
  <div class="tip"></div>
  <svg class="car" width="68" height="32" viewBox="0 0 68 32">
    <path d="M15 1 H35.500 L25.600 31.200 H0.900 V13.500 Q1 11.500 3 10.500 Z" fill="#f8b56c"/>
    <path d="M37.500 1 L53 1.800 Q56 2.200 58 4 L64.500 10 Q66 11.500 66.200 14 L66.300 31.200 H27.600 Z" fill="#8f8f8f"/>
    <path d="M2.500 13.800 H17.500 M45 14.500 L61 13" stroke="#fff" stroke-width="2.400" fill="none"/>
    <path d="M27 17.500 L45 17.500 L42 24 L25 24 Z" fill="#fff"/>
    <path d="M9 22 V31 M10 26.500 H40" stroke="#fff" stroke-width="1.600" fill="none"/>
    <path d="M40 6 L33 14" stroke="#fff" stroke-width="2" fill="none"/>
  </svg>
  <div class="lg">汽修帮手</div>
</div>

<div id="topsh"></div>
</body>
</html>
